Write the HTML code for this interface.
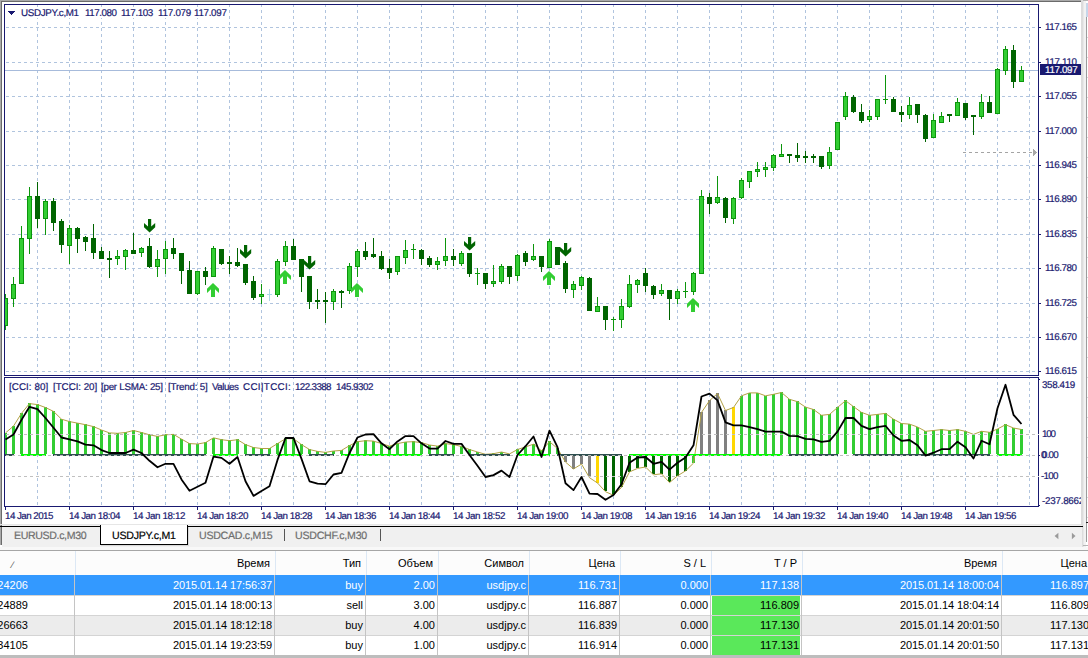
<!DOCTYPE html>
<html><head><meta charset="utf-8"><title>USDJPY.c,M1</title>
<style>
html,body{margin:0;padding:0}
body{width:1088px;height:658px;overflow:hidden;background:#fff;position:relative;font-family:"Liberation Sans",sans-serif}
.t{position:absolute;white-space:pre;line-height:12px;height:12px;-webkit-text-stroke:0.2px currentColor;transform:rotate(0.03deg);transform-origin:0 50%}
.h,.c{position:absolute;white-space:pre;text-align:right;font-size:11px;line-height:14px;height:14px;color:#000}
</style></head><body>
<svg width="1088" height="548" viewBox="0 0 1088 548" shape-rendering="crispEdges" style="position:absolute;left:0;top:0"><rect x="0" y="0" width="1081" height="1" fill="#a9a9a9"/>
<rect x="0" y="1" width="1081" height="1" fill="#6b6b6b"/>
<rect x="0" y="0" width="1" height="545" fill="#a9a9a9"/>
<rect x="1" y="1" width="1" height="544" fill="#6b6b6b"/>
<rect x="1081" y="0" width="2" height="548" fill="#dcdcdc"/>
<rect x="1083" y="0" width="1" height="548" fill="#e8e8e8"/>
<rect x="1084" y="0" width="2" height="548" fill="#f2f2f2"/>
<rect x="1083" y="0" width="5" height="1" fill="#b4b4b4"/>
<rect x="1086" y="3" width="2" height="14" fill="#c6d6ea"/>
<rect x="1086" y="17" width="1" height="525" fill="#9c9c9c"/>
<rect x="1086" y="522" width="2" height="1" fill="#202020"/>
<rect x="1083" y="545" width="5" height="1" fill="#b4b4b4"/>
<rect x="1087" y="37" width="1" height="1" fill="#d8d8d8"/>
<rect x="1087" y="57" width="1" height="1" fill="#d8d8d8"/>
<rect x="1087" y="77" width="1" height="1" fill="#d8d8d8"/>
<rect x="1087" y="97" width="1" height="1" fill="#d8d8d8"/>
<rect x="1087" y="117" width="1" height="1" fill="#d8d8d8"/>
<rect x="1087" y="137" width="1" height="1" fill="#d8d8d8"/>
<rect x="1087" y="157" width="1" height="1" fill="#d8d8d8"/>
<rect x="1087" y="177" width="1" height="1" fill="#d8d8d8"/>
<rect x="1087" y="197" width="1" height="1" fill="#d8d8d8"/>
<rect x="1087" y="217" width="1" height="1" fill="#d8d8d8"/>
<rect x="1087" y="237" width="1" height="1" fill="#d8d8d8"/>
<rect x="1087" y="257" width="1" height="1" fill="#d8d8d8"/>
<rect x="1087" y="277" width="1" height="1" fill="#d8d8d8"/>
<rect x="1087" y="297" width="1" height="1" fill="#d8d8d8"/>
<rect x="1087" y="317" width="1" height="1" fill="#d8d8d8"/>
<rect x="1087" y="337" width="1" height="1" fill="#d8d8d8"/>
<rect x="1087" y="357" width="1" height="1" fill="#d8d8d8"/>
<rect x="1087" y="377" width="1" height="1" fill="#d8d8d8"/>
<rect x="1087" y="397" width="1" height="1" fill="#d8d8d8"/>
<rect x="1087" y="417" width="1" height="1" fill="#d8d8d8"/>
<rect x="1087" y="437" width="1" height="1" fill="#d8d8d8"/>
<rect x="1087" y="457" width="1" height="1" fill="#d8d8d8"/>
<rect x="1087" y="477" width="1" height="1" fill="#d8d8d8"/>
<rect x="1087" y="497" width="1" height="1" fill="#d8d8d8"/>
<rect x="1087" y="517" width="1" height="1" fill="#d8d8d8"/>
<path d="M37.5 4V375M69.5 4V375M101.5 4V375M133.5 4V375M165.5 4V375M197.5 4V375M229.5 4V375M261.5 4V375M293.5 4V375M325.5 4V375M357.5 4V375M389.5 4V375M421.5 4V375M453.5 4V375M485.5 4V375M517.5 4V375M549.5 4V375M581.5 4V375M613.5 4V375M645.5 4V375M677.5 4V375M709.5 4V375M741.5 4V375M773.5 4V375M805.5 4V375M837.5 4V375M869.5 4V375M901.5 4V375M933.5 4V375M965.5 4V375M997.5 4V375M1029.5 4V375" stroke="#b0c4de" stroke-dasharray="3 3" fill="none"/>
<path d="M37.5 378V506M69.5 378V506M101.5 378V506M133.5 378V506M165.5 378V506M197.5 378V506M229.5 378V506M261.5 378V506M293.5 378V506M325.5 378V506M357.5 378V506M389.5 378V506M421.5 378V506M453.5 378V506M485.5 378V506M517.5 378V506M549.5 378V506M581.5 378V506M613.5 378V506M645.5 378V506M677.5 378V506M709.5 378V506M741.5 378V506M773.5 378V506M805.5 378V506M837.5 378V506M869.5 378V506M901.5 378V506M933.5 378V506M965.5 378V506M997.5 378V506M1029.5 378V506" stroke="#b0c4de" stroke-dasharray="3 3" stroke-dashoffset="2" fill="none"/>
<path d="M6 27.5H1038M6 62.5H1038M6 96.5H1038M6 131.5H1038M6 165.5H1038M6 199.5H1038M6 234.5H1038M6 268.5H1038M6 303.5H1038M6 337.5H1038M6 371.5H1038" stroke="#b0c4de" stroke-dasharray="3 3" fill="none"/>
<rect x="20" y="7" width="208" height="11" fill="#fff"/>
<rect x="5" y="70" width="1033" height="1" fill="#a7bbdb"/>
<rect x="5" y="294" width="1" height="36" fill="#0c960c"/>
<rect x="5" y="298" width="3" height="28" fill="#0c960c"/>
<rect x="5" y="299" width="2" height="26" fill="#32cd32"/>
<rect x="13" y="277" width="1" height="30" fill="#0c960c"/>
<rect x="11" y="284" width="5" height="15" fill="#0c960c"/>
<rect x="12" y="285" width="3" height="13" fill="#32cd32"/>
<rect x="21" y="226" width="1" height="58" fill="#0c960c"/>
<rect x="19" y="238" width="5" height="46" fill="#0c960c"/>
<rect x="20" y="239" width="3" height="44" fill="#32cd32"/>
<rect x="29" y="187" width="1" height="67" fill="#0c960c"/>
<rect x="27" y="196" width="5" height="43" fill="#0c960c"/>
<rect x="28" y="197" width="3" height="41" fill="#32cd32"/>
<rect x="37" y="182" width="1" height="46" fill="#006400"/>
<rect x="35" y="196" width="5" height="23" fill="#006400"/>
<rect x="45" y="199" width="1" height="36" fill="#0c960c"/>
<rect x="43" y="201" width="5" height="18" fill="#0c960c"/>
<rect x="44" y="202" width="3" height="16" fill="#32cd32"/>
<rect x="53" y="198" width="1" height="33" fill="#006400"/>
<rect x="51" y="201" width="5" height="22" fill="#006400"/>
<rect x="61" y="219" width="1" height="34" fill="#006400"/>
<rect x="59" y="221" width="5" height="24" fill="#006400"/>
<rect x="69" y="225" width="1" height="39" fill="#0c960c"/>
<rect x="67" y="228" width="5" height="18" fill="#0c960c"/>
<rect x="68" y="229" width="3" height="16" fill="#32cd32"/>
<rect x="77" y="227" width="1" height="26" fill="#006400"/>
<rect x="75" y="228" width="5" height="11" fill="#006400"/>
<rect x="85" y="236" width="1" height="15" fill="#006400"/>
<rect x="83" y="237" width="5" height="5" fill="#006400"/>
<rect x="93" y="224" width="1" height="35" fill="#006400"/>
<rect x="91" y="238" width="5" height="15" fill="#006400"/>
<rect x="101" y="247" width="1" height="12" fill="#006400"/>
<rect x="99" y="251" width="5" height="8" fill="#006400"/>
<rect x="109" y="251" width="1" height="27" fill="#006400"/>
<rect x="107" y="258" width="5" height="2" fill="#006400"/>
<rect x="117" y="250" width="1" height="15" fill="#0c960c"/>
<rect x="115" y="256" width="5" height="3" fill="#0c960c"/>
<rect x="116" y="257" width="3" height="1" fill="#32cd32"/>
<rect x="125" y="249" width="1" height="21" fill="#0c960c"/>
<rect x="123" y="250" width="5" height="7" fill="#0c960c"/>
<rect x="124" y="251" width="3" height="5" fill="#32cd32"/>
<rect x="133" y="233" width="1" height="21" fill="#006400"/>
<rect x="131" y="250" width="5" height="4" fill="#006400"/>
<rect x="141" y="247" width="1" height="10" fill="#0c960c"/>
<rect x="139" y="248" width="5" height="5" fill="#0c960c"/>
<rect x="140" y="249" width="3" height="3" fill="#32cd32"/>
<rect x="149" y="238" width="1" height="30" fill="#006400"/>
<rect x="147" y="246" width="5" height="21" fill="#006400"/>
<rect x="157" y="250" width="1" height="27" fill="#0c960c"/>
<rect x="155" y="259" width="5" height="8" fill="#0c960c"/>
<rect x="156" y="260" width="3" height="6" fill="#32cd32"/>
<rect x="165" y="241" width="1" height="33" fill="#0c960c"/>
<rect x="163" y="249" width="5" height="10" fill="#0c960c"/>
<rect x="164" y="250" width="3" height="8" fill="#32cd32"/>
<rect x="173" y="238" width="1" height="21" fill="#006400"/>
<rect x="171" y="248" width="5" height="6" fill="#006400"/>
<rect x="181" y="253" width="1" height="31" fill="#006400"/>
<rect x="179" y="253" width="5" height="18" fill="#006400"/>
<rect x="189" y="261" width="1" height="33" fill="#006400"/>
<rect x="187" y="270" width="5" height="24" fill="#006400"/>
<rect x="197" y="271" width="1" height="24" fill="#0c960c"/>
<rect x="195" y="271" width="5" height="23" fill="#0c960c"/>
<rect x="196" y="272" width="3" height="21" fill="#32cd32"/>
<rect x="205" y="267" width="1" height="18" fill="#006400"/>
<rect x="203" y="271" width="5" height="6" fill="#006400"/>
<rect x="213" y="246" width="1" height="31" fill="#0c960c"/>
<rect x="211" y="248" width="5" height="29" fill="#0c960c"/>
<rect x="212" y="249" width="3" height="27" fill="#32cd32"/>
<rect x="221" y="249" width="1" height="16" fill="#006400"/>
<rect x="219" y="249" width="5" height="15" fill="#006400"/>
<rect x="229" y="256" width="1" height="18" fill="#006400"/>
<rect x="227" y="262" width="5" height="2" fill="#006400"/>
<rect x="237" y="248" width="1" height="19" fill="#006400"/>
<rect x="235" y="262" width="5" height="4" fill="#006400"/>
<rect x="245" y="264" width="1" height="21" fill="#006400"/>
<rect x="243" y="264" width="5" height="19" fill="#006400"/>
<rect x="253" y="276" width="1" height="24" fill="#006400"/>
<rect x="251" y="281" width="5" height="17" fill="#006400"/>
<rect x="261" y="284" width="1" height="20" fill="#0c960c"/>
<rect x="259" y="294" width="5" height="3" fill="#0c960c"/>
<rect x="260" y="295" width="3" height="1" fill="#32cd32"/>
<rect x="269" y="289" width="1" height="12" fill="#add8e6"/>
<rect x="267" y="294" width="5" height="1" fill="#add8e6"/>
<rect x="277" y="259" width="1" height="38" fill="#0c960c"/>
<rect x="275" y="261" width="5" height="34" fill="#0c960c"/>
<rect x="276" y="262" width="3" height="32" fill="#32cd32"/>
<rect x="285" y="241" width="1" height="25" fill="#0c960c"/>
<rect x="283" y="246" width="5" height="16" fill="#0c960c"/>
<rect x="284" y="247" width="3" height="14" fill="#32cd32"/>
<rect x="293" y="239" width="1" height="21" fill="#006400"/>
<rect x="291" y="246" width="5" height="14" fill="#006400"/>
<rect x="301" y="259" width="1" height="33" fill="#006400"/>
<rect x="299" y="259" width="5" height="18" fill="#006400"/>
<rect x="309" y="276" width="1" height="33" fill="#006400"/>
<rect x="307" y="276" width="5" height="26" fill="#006400"/>
<rect x="317" y="289" width="1" height="20" fill="#006400"/>
<rect x="315" y="300" width="5" height="2" fill="#006400"/>
<rect x="325" y="292" width="1" height="31" fill="#006400"/>
<rect x="323" y="300" width="5" height="2" fill="#006400"/>
<rect x="333" y="289" width="1" height="21" fill="#0c960c"/>
<rect x="331" y="291" width="5" height="11" fill="#0c960c"/>
<rect x="332" y="292" width="3" height="9" fill="#32cd32"/>
<rect x="341" y="290" width="1" height="18" fill="#006400"/>
<rect x="339" y="291" width="5" height="2" fill="#006400"/>
<rect x="349" y="263" width="1" height="31" fill="#0c960c"/>
<rect x="347" y="266" width="5" height="25" fill="#0c960c"/>
<rect x="348" y="267" width="3" height="23" fill="#32cd32"/>
<rect x="357" y="249" width="1" height="28" fill="#0c960c"/>
<rect x="355" y="251" width="5" height="16" fill="#0c960c"/>
<rect x="356" y="252" width="3" height="14" fill="#32cd32"/>
<rect x="365" y="242" width="1" height="18" fill="#006400"/>
<rect x="363" y="251" width="5" height="6" fill="#006400"/>
<rect x="373" y="238" width="1" height="20" fill="#006400"/>
<rect x="371" y="254" width="5" height="3" fill="#006400"/>
<rect x="381" y="251" width="1" height="19" fill="#006400"/>
<rect x="379" y="256" width="5" height="13" fill="#006400"/>
<rect x="389" y="259" width="1" height="20" fill="#006400"/>
<rect x="387" y="268" width="5" height="5" fill="#006400"/>
<rect x="397" y="256" width="1" height="19" fill="#0c960c"/>
<rect x="395" y="256" width="5" height="16" fill="#0c960c"/>
<rect x="396" y="257" width="3" height="14" fill="#32cd32"/>
<rect x="405" y="240" width="1" height="24" fill="#0c960c"/>
<rect x="403" y="250" width="5" height="8" fill="#0c960c"/>
<rect x="404" y="251" width="3" height="6" fill="#32cd32"/>
<rect x="413" y="244" width="1" height="15" fill="#0c960c"/>
<rect x="411" y="249" width="5" height="1" fill="#0c960c"/>
<rect x="421" y="249" width="1" height="16" fill="#006400"/>
<rect x="419" y="250" width="5" height="9" fill="#006400"/>
<rect x="429" y="256" width="1" height="11" fill="#006400"/>
<rect x="427" y="258" width="5" height="7" fill="#006400"/>
<rect x="437" y="257" width="1" height="13" fill="#0c960c"/>
<rect x="435" y="261" width="5" height="4" fill="#0c960c"/>
<rect x="436" y="262" width="3" height="2" fill="#32cd32"/>
<rect x="445" y="238" width="1" height="28" fill="#0c960c"/>
<rect x="443" y="256" width="5" height="5" fill="#0c960c"/>
<rect x="444" y="257" width="3" height="3" fill="#32cd32"/>
<rect x="453" y="249" width="1" height="17" fill="#006400"/>
<rect x="451" y="256" width="5" height="4" fill="#006400"/>
<rect x="461" y="251" width="1" height="15" fill="#0c960c"/>
<rect x="459" y="253" width="5" height="11" fill="#0c960c"/>
<rect x="460" y="254" width="3" height="9" fill="#32cd32"/>
<rect x="469" y="253" width="1" height="24" fill="#006400"/>
<rect x="467" y="253" width="5" height="21" fill="#006400"/>
<rect x="477" y="268" width="1" height="17" fill="#0c960c"/>
<rect x="475" y="273" width="5" height="1" fill="#0c960c"/>
<rect x="485" y="273" width="1" height="16" fill="#006400"/>
<rect x="483" y="273" width="5" height="11" fill="#006400"/>
<rect x="493" y="265" width="1" height="22" fill="#0c960c"/>
<rect x="491" y="281" width="5" height="3" fill="#0c960c"/>
<rect x="492" y="282" width="3" height="1" fill="#32cd32"/>
<rect x="501" y="264" width="1" height="20" fill="#0c960c"/>
<rect x="499" y="266" width="5" height="16" fill="#0c960c"/>
<rect x="500" y="267" width="3" height="14" fill="#32cd32"/>
<rect x="509" y="266" width="1" height="18" fill="#006400"/>
<rect x="507" y="266" width="5" height="11" fill="#006400"/>
<rect x="517" y="254" width="1" height="27" fill="#0c960c"/>
<rect x="515" y="255" width="5" height="21" fill="#0c960c"/>
<rect x="516" y="256" width="3" height="19" fill="#32cd32"/>
<rect x="525" y="251" width="1" height="15" fill="#006400"/>
<rect x="523" y="253" width="5" height="9" fill="#006400"/>
<rect x="533" y="244" width="1" height="17" fill="#0c960c"/>
<rect x="531" y="256" width="5" height="4" fill="#0c960c"/>
<rect x="532" y="257" width="3" height="2" fill="#32cd32"/>
<rect x="541" y="256" width="1" height="16" fill="#006400"/>
<rect x="539" y="256" width="5" height="11" fill="#006400"/>
<rect x="549" y="239" width="1" height="29" fill="#0c960c"/>
<rect x="547" y="241" width="5" height="27" fill="#0c960c"/>
<rect x="548" y="242" width="3" height="25" fill="#32cd32"/>
<rect x="557" y="247" width="1" height="18" fill="#006400"/>
<rect x="555" y="247" width="5" height="18" fill="#006400"/>
<rect x="565" y="261" width="1" height="32" fill="#006400"/>
<rect x="563" y="263" width="5" height="26" fill="#006400"/>
<rect x="573" y="281" width="1" height="17" fill="#0c960c"/>
<rect x="571" y="284" width="5" height="6" fill="#0c960c"/>
<rect x="572" y="285" width="3" height="4" fill="#32cd32"/>
<rect x="581" y="276" width="1" height="14" fill="#0c960c"/>
<rect x="579" y="277" width="5" height="9" fill="#0c960c"/>
<rect x="580" y="278" width="3" height="7" fill="#32cd32"/>
<rect x="589" y="277" width="1" height="34" fill="#006400"/>
<rect x="587" y="278" width="5" height="33" fill="#006400"/>
<rect x="597" y="297" width="1" height="15" fill="#0c960c"/>
<rect x="595" y="306" width="5" height="6" fill="#0c960c"/>
<rect x="596" y="307" width="3" height="4" fill="#32cd32"/>
<rect x="605" y="306" width="1" height="24" fill="#006400"/>
<rect x="603" y="306" width="5" height="14" fill="#006400"/>
<rect x="613" y="317" width="1" height="14" fill="#0c960c"/>
<rect x="611" y="319" width="5" height="1" fill="#0c960c"/>
<rect x="621" y="299" width="1" height="29" fill="#0c960c"/>
<rect x="619" y="306" width="5" height="14" fill="#0c960c"/>
<rect x="620" y="307" width="3" height="12" fill="#32cd32"/>
<rect x="629" y="275" width="1" height="33" fill="#0c960c"/>
<rect x="627" y="284" width="5" height="23" fill="#0c960c"/>
<rect x="628" y="285" width="3" height="21" fill="#32cd32"/>
<rect x="637" y="279" width="1" height="14" fill="#0c960c"/>
<rect x="635" y="280" width="5" height="5" fill="#0c960c"/>
<rect x="636" y="281" width="3" height="3" fill="#32cd32"/>
<rect x="645" y="268" width="1" height="24" fill="#006400"/>
<rect x="643" y="273" width="5" height="13" fill="#006400"/>
<rect x="653" y="285" width="1" height="14" fill="#006400"/>
<rect x="651" y="286" width="5" height="9" fill="#006400"/>
<rect x="661" y="284" width="1" height="12" fill="#0c960c"/>
<rect x="659" y="290" width="5" height="4" fill="#0c960c"/>
<rect x="660" y="291" width="3" height="2" fill="#32cd32"/>
<rect x="669" y="290" width="1" height="30" fill="#006400"/>
<rect x="667" y="290" width="5" height="9" fill="#006400"/>
<rect x="677" y="289" width="1" height="15" fill="#0c960c"/>
<rect x="675" y="291" width="5" height="8" fill="#0c960c"/>
<rect x="676" y="292" width="3" height="6" fill="#32cd32"/>
<rect x="685" y="282" width="1" height="16" fill="#0c960c"/>
<rect x="683" y="291" width="5" height="1" fill="#0c960c"/>
<rect x="693" y="272" width="1" height="23" fill="#0c960c"/>
<rect x="691" y="273" width="5" height="19" fill="#0c960c"/>
<rect x="692" y="274" width="3" height="17" fill="#32cd32"/>
<rect x="701" y="190" width="1" height="84" fill="#0c960c"/>
<rect x="699" y="196" width="5" height="78" fill="#0c960c"/>
<rect x="700" y="197" width="3" height="76" fill="#32cd32"/>
<rect x="709" y="193" width="1" height="21" fill="#006400"/>
<rect x="707" y="197" width="5" height="7" fill="#006400"/>
<rect x="717" y="176" width="1" height="28" fill="#0c960c"/>
<rect x="715" y="197" width="5" height="6" fill="#0c960c"/>
<rect x="716" y="198" width="3" height="4" fill="#32cd32"/>
<rect x="725" y="197" width="1" height="26" fill="#006400"/>
<rect x="723" y="198" width="5" height="20" fill="#006400"/>
<rect x="733" y="197" width="1" height="27" fill="#0c960c"/>
<rect x="731" y="198" width="5" height="21" fill="#0c960c"/>
<rect x="732" y="199" width="3" height="19" fill="#32cd32"/>
<rect x="741" y="178" width="1" height="21" fill="#0c960c"/>
<rect x="739" y="180" width="5" height="18" fill="#0c960c"/>
<rect x="740" y="181" width="3" height="16" fill="#32cd32"/>
<rect x="749" y="171" width="1" height="17" fill="#0c960c"/>
<rect x="747" y="171" width="5" height="11" fill="#0c960c"/>
<rect x="748" y="172" width="3" height="9" fill="#32cd32"/>
<rect x="757" y="162" width="1" height="15" fill="#0c960c"/>
<rect x="755" y="169" width="5" height="3" fill="#0c960c"/>
<rect x="756" y="170" width="3" height="1" fill="#32cd32"/>
<rect x="765" y="162" width="1" height="15" fill="#0c960c"/>
<rect x="763" y="167" width="5" height="3" fill="#0c960c"/>
<rect x="764" y="168" width="3" height="1" fill="#32cd32"/>
<rect x="773" y="154" width="1" height="17" fill="#0c960c"/>
<rect x="771" y="155" width="5" height="13" fill="#0c960c"/>
<rect x="772" y="156" width="3" height="11" fill="#32cd32"/>
<rect x="781" y="144" width="1" height="13" fill="#0c960c"/>
<rect x="779" y="154" width="5" height="3" fill="#0c960c"/>
<rect x="780" y="155" width="3" height="1" fill="#32cd32"/>
<rect x="789" y="154" width="1" height="9" fill="#006400"/>
<rect x="787" y="154" width="5" height="2" fill="#006400"/>
<rect x="797" y="143" width="1" height="19" fill="#006400"/>
<rect x="795" y="155" width="5" height="3" fill="#006400"/>
<rect x="805" y="151" width="1" height="12" fill="#006400"/>
<rect x="803" y="156" width="5" height="2" fill="#006400"/>
<rect x="813" y="154" width="1" height="9" fill="#006400"/>
<rect x="811" y="156" width="5" height="2" fill="#006400"/>
<rect x="821" y="156" width="1" height="13" fill="#006400"/>
<rect x="819" y="156" width="5" height="11" fill="#006400"/>
<rect x="829" y="147" width="1" height="22" fill="#0c960c"/>
<rect x="827" y="152" width="5" height="14" fill="#0c960c"/>
<rect x="828" y="153" width="3" height="12" fill="#32cd32"/>
<rect x="837" y="122" width="1" height="28" fill="#0c960c"/>
<rect x="835" y="122" width="5" height="28" fill="#0c960c"/>
<rect x="836" y="123" width="3" height="26" fill="#32cd32"/>
<rect x="845" y="92" width="1" height="28" fill="#0c960c"/>
<rect x="843" y="96" width="5" height="21" fill="#0c960c"/>
<rect x="844" y="97" width="3" height="19" fill="#32cd32"/>
<rect x="853" y="95" width="1" height="18" fill="#006400"/>
<rect x="851" y="97" width="5" height="15" fill="#006400"/>
<rect x="861" y="104" width="1" height="19" fill="#006400"/>
<rect x="859" y="112" width="5" height="9" fill="#006400"/>
<rect x="869" y="110" width="1" height="12" fill="#0c960c"/>
<rect x="867" y="116" width="5" height="4" fill="#0c960c"/>
<rect x="868" y="117" width="3" height="2" fill="#32cd32"/>
<rect x="877" y="99" width="1" height="21" fill="#0c960c"/>
<rect x="875" y="99" width="5" height="18" fill="#0c960c"/>
<rect x="876" y="100" width="3" height="16" fill="#32cd32"/>
<rect x="885" y="75" width="1" height="29" fill="#0c960c"/>
<rect x="883" y="99" width="5" height="1" fill="#0c960c"/>
<rect x="893" y="97" width="1" height="15" fill="#006400"/>
<rect x="891" y="99" width="5" height="13" fill="#006400"/>
<rect x="901" y="106" width="1" height="16" fill="#006400"/>
<rect x="899" y="112" width="5" height="3" fill="#006400"/>
<rect x="909" y="97" width="1" height="22" fill="#0c960c"/>
<rect x="907" y="105" width="5" height="10" fill="#0c960c"/>
<rect x="908" y="106" width="3" height="8" fill="#32cd32"/>
<rect x="917" y="104" width="1" height="19" fill="#006400"/>
<rect x="915" y="104" width="5" height="11" fill="#006400"/>
<rect x="925" y="114" width="1" height="28" fill="#006400"/>
<rect x="923" y="115" width="5" height="24" fill="#006400"/>
<rect x="933" y="114" width="1" height="24" fill="#0c960c"/>
<rect x="931" y="120" width="5" height="18" fill="#0c960c"/>
<rect x="932" y="121" width="3" height="16" fill="#32cd32"/>
<rect x="941" y="112" width="1" height="11" fill="#0c960c"/>
<rect x="939" y="116" width="5" height="7" fill="#0c960c"/>
<rect x="940" y="117" width="3" height="5" fill="#32cd32"/>
<rect x="949" y="114" width="1" height="8" fill="#006400"/>
<rect x="947" y="114" width="5" height="2" fill="#006400"/>
<rect x="957" y="98" width="1" height="18" fill="#0c960c"/>
<rect x="955" y="102" width="5" height="14" fill="#0c960c"/>
<rect x="956" y="103" width="3" height="12" fill="#32cd32"/>
<rect x="965" y="103" width="1" height="17" fill="#006400"/>
<rect x="963" y="103" width="5" height="15" fill="#006400"/>
<rect x="973" y="115" width="1" height="20" fill="#006400"/>
<rect x="971" y="115" width="5" height="2" fill="#006400"/>
<rect x="981" y="94" width="1" height="25" fill="#0c960c"/>
<rect x="979" y="102" width="5" height="15" fill="#0c960c"/>
<rect x="980" y="103" width="3" height="13" fill="#32cd32"/>
<rect x="989" y="96" width="1" height="17" fill="#006400"/>
<rect x="987" y="102" width="5" height="11" fill="#006400"/>
<rect x="997" y="68" width="1" height="46" fill="#0c960c"/>
<rect x="995" y="69" width="5" height="45" fill="#0c960c"/>
<rect x="996" y="70" width="3" height="43" fill="#32cd32"/>
<rect x="1005" y="46" width="1" height="29" fill="#0c960c"/>
<rect x="1003" y="49" width="5" height="22" fill="#0c960c"/>
<rect x="1004" y="50" width="3" height="20" fill="#32cd32"/>
<rect x="1013" y="45" width="1" height="43" fill="#006400"/>
<rect x="1011" y="50" width="5" height="32" fill="#006400"/>
<rect x="1021" y="66" width="1" height="16" fill="#0c960c"/>
<rect x="1019" y="70" width="5" height="12" fill="#0c960c"/>
<rect x="1020" y="71" width="3" height="10" fill="#32cd32"/>
<path d="M148.0 219.0L151.2 219.0L151.2 226.6L155.2 223.0L155.2 227.3L149.6 232.4L144.0 227.3L144.0 223.0L148.0 226.6Z" fill="#006400" shape-rendering="geometricPrecision"/>
<path d="M244.0 245.0L247.2 245.0L247.2 252.6L251.2 249.0L251.2 253.3L245.6 258.4L240.0 253.3L240.0 249.0L244.0 252.6Z" fill="#006400" shape-rendering="geometricPrecision"/>
<path d="M308.0 256.0L311.2 256.0L311.2 263.6L315.2 260.0L315.2 264.3L309.6 269.4L304.0 264.3L304.0 260.0L308.0 263.6Z" fill="#006400" shape-rendering="geometricPrecision"/>
<path d="M468.0 237.0L471.2 237.0L471.2 244.6L475.2 241.0L475.2 245.3L469.6 250.4L464.0 245.3L464.0 241.0L468.0 244.6Z" fill="#006400" shape-rendering="geometricPrecision"/>
<path d="M564.0 243.0L567.2 243.0L567.2 250.6L571.2 247.0L571.2 251.3L565.6 256.4L560.0 251.3L560.0 247.0L564.0 250.6Z" fill="#006400" shape-rendering="geometricPrecision"/>
<path d="M213.0 283.0L219.0 288.8L219.0 293.0L215.0 289.2L215.0 297.0L211.0 297.0L211.0 289.2L207.0 293.0L207.0 288.8Z" fill="#32cd32" shape-rendering="geometricPrecision"/>
<path d="M285.0 270.0L291.0 275.8L291.0 280.0L287.0 276.2L287.0 284.0L283.0 284.0L283.0 276.2L279.0 280.0L279.0 275.8Z" fill="#32cd32" shape-rendering="geometricPrecision"/>
<path d="M357.0 283.0L363.0 288.8L363.0 293.0L359.0 289.2L359.0 297.0L355.0 297.0L355.0 289.2L351.0 293.0L351.0 288.8Z" fill="#32cd32" shape-rendering="geometricPrecision"/>
<path d="M549.0 271.0L555.0 276.8L555.0 281.0L551.0 277.2L551.0 285.0L547.0 285.0L547.0 277.2L543.0 281.0L543.0 276.8Z" fill="#32cd32" shape-rendering="geometricPrecision"/>
<path d="M693.0 298.0L699.0 303.8L699.0 308.0L695.0 304.2L695.0 312.0L691.0 312.0L691.0 304.2L687.0 308.0L687.0 303.8Z" fill="#32cd32" shape-rendering="geometricPrecision"/>
<path d="M963 152.5H1032" stroke="#a4a4a4" stroke-dasharray="3 3" fill="none"/>
<path d="M1033 149h1v1h1v1h1v1h1v1h-1v1h-1v1h-1v1h-1z" fill="#a8a8a8"/>
<rect x="5" y="433" width="2" height="21" fill="#32cd32"/>
<rect x="12" y="426" width="3" height="28" fill="#32cd32"/>
<rect x="20" y="413" width="3" height="41" fill="#32cd32"/>
<rect x="28" y="403" width="3" height="51" fill="#32cd32"/>
<rect x="36" y="404" width="3" height="50" fill="#32cd32"/>
<rect x="44" y="407" width="3" height="47" fill="#32cd32"/>
<rect x="52" y="411" width="3" height="43" fill="#32cd32"/>
<rect x="60" y="419" width="3" height="35" fill="#32cd32"/>
<rect x="68" y="421" width="3" height="33" fill="#32cd32"/>
<rect x="76" y="423" width="3" height="31" fill="#32cd32"/>
<rect x="84" y="424" width="3" height="30" fill="#32cd32"/>
<rect x="92" y="426" width="3" height="28" fill="#32cd32"/>
<rect x="100" y="430" width="3" height="24" fill="#32cd32"/>
<rect x="108" y="433" width="3" height="21" fill="#32cd32"/>
<rect x="116" y="433" width="3" height="21" fill="#32cd32"/>
<rect x="124" y="432" width="3" height="22" fill="#32cd32"/>
<rect x="132" y="430" width="3" height="24" fill="#32cd32"/>
<rect x="140" y="432" width="3" height="22" fill="#32cd32"/>
<rect x="148" y="434" width="3" height="20" fill="#32cd32"/>
<rect x="156" y="436" width="3" height="18" fill="#32cd32"/>
<rect x="164" y="434" width="3" height="20" fill="#32cd32"/>
<rect x="172" y="434" width="3" height="20" fill="#32cd32"/>
<rect x="180" y="439" width="3" height="15" fill="#32cd32"/>
<rect x="188" y="443" width="3" height="11" fill="#32cd32"/>
<rect x="196" y="444" width="3" height="10" fill="#32cd32"/>
<rect x="204" y="442" width="3" height="12" fill="#32cd32"/>
<rect x="212" y="438" width="3" height="16" fill="#32cd32"/>
<rect x="220" y="439" width="3" height="15" fill="#32cd32"/>
<rect x="228" y="440" width="3" height="14" fill="#32cd32"/>
<rect x="236" y="439" width="3" height="15" fill="#32cd32"/>
<rect x="244" y="444" width="3" height="10" fill="#32cd32"/>
<rect x="252" y="447" width="3" height="7" fill="#32cd32"/>
<rect x="260" y="448" width="3" height="6" fill="#32cd32"/>
<rect x="268" y="448" width="3" height="6" fill="#32cd32"/>
<rect x="276" y="443" width="3" height="11" fill="#32cd32"/>
<rect x="284" y="438" width="3" height="16" fill="#32cd32"/>
<rect x="292" y="438" width="3" height="16" fill="#32cd32"/>
<rect x="300" y="444" width="3" height="10" fill="#32cd32"/>
<rect x="308" y="449" width="3" height="5" fill="#32cd32"/>
<rect x="316" y="451" width="3" height="3" fill="#32cd32"/>
<rect x="324" y="452" width="3" height="2" fill="#32cd32"/>
<rect x="332" y="451" width="3" height="3" fill="#32cd32"/>
<rect x="340" y="450" width="3" height="4" fill="#32cd32"/>
<rect x="348" y="445" width="3" height="9" fill="#32cd32"/>
<rect x="356" y="441" width="3" height="13" fill="#32cd32"/>
<rect x="364" y="440" width="3" height="14" fill="#32cd32"/>
<rect x="372" y="441" width="3" height="13" fill="#32cd32"/>
<rect x="380" y="443" width="3" height="11" fill="#32cd32"/>
<rect x="388" y="446" width="3" height="8" fill="#32cd32"/>
<rect x="396" y="443" width="3" height="11" fill="#32cd32"/>
<rect x="404" y="442" width="3" height="12" fill="#32cd32"/>
<rect x="412" y="441" width="3" height="13" fill="#32cd32"/>
<rect x="420" y="442" width="3" height="12" fill="#32cd32"/>
<rect x="428" y="445" width="3" height="9" fill="#32cd32"/>
<rect x="436" y="446" width="3" height="8" fill="#32cd32"/>
<rect x="444" y="443" width="3" height="11" fill="#32cd32"/>
<rect x="452" y="444" width="3" height="10" fill="#32cd32"/>
<rect x="460" y="446" width="3" height="8" fill="#32cd32"/>
<rect x="468" y="449" width="3" height="5" fill="#32cd32"/>
<rect x="476" y="452" width="3" height="2" fill="#32cd32"/>
<rect x="484" y="454" width="3" height="0" fill="#32cd32"/>
<rect x="492" y="453" width="3" height="1" fill="#32cd32"/>
<rect x="500" y="452" width="3" height="2" fill="#32cd32"/>
<rect x="508" y="454" width="3" height="0" fill="#32cd32"/>
<rect x="516" y="449" width="3" height="5" fill="#32cd32"/>
<rect x="524" y="447" width="3" height="7" fill="#32cd32"/>
<rect x="532" y="444" width="3" height="10" fill="#32cd32"/>
<rect x="540" y="450" width="3" height="4" fill="#32cd32"/>
<rect x="548" y="441" width="3" height="13" fill="#32cd32"/>
<rect x="556" y="448" width="3" height="6" fill="#32cd32"/>
<rect x="564" y="456" width="3" height="6" fill="#808080"/>
<rect x="572" y="456" width="3" height="13" fill="#808080"/>
<rect x="580" y="456" width="3" height="8" fill="#808080"/>
<rect x="588" y="456" width="3" height="21" fill="#808080"/>
<rect x="596" y="456" width="3" height="27" fill="#ffd700"/>
<rect x="604" y="456" width="3" height="35" fill="#006400"/>
<rect x="612" y="456" width="3" height="39" fill="#006400"/>
<rect x="620" y="456" width="3" height="31" fill="#006400"/>
<rect x="628" y="456" width="3" height="16" fill="#006400"/>
<rect x="636" y="456" width="3" height="12" fill="#006400"/>
<rect x="644" y="456" width="3" height="11" fill="#006400"/>
<rect x="652" y="456" width="3" height="18" fill="#006400"/>
<rect x="660" y="456" width="3" height="18" fill="#006400"/>
<rect x="668" y="456" width="3" height="26" fill="#006400"/>
<rect x="676" y="456" width="3" height="20" fill="#006400"/>
<rect x="684" y="456" width="3" height="15" fill="#006400"/>
<rect x="692" y="456" width="3" height="7" fill="#32cd32"/>
<rect x="700" y="412" width="3" height="42" fill="#808080"/>
<rect x="708" y="400" width="3" height="54" fill="#808080"/>
<rect x="716" y="393" width="3" height="61" fill="#808080"/>
<rect x="724" y="410" width="3" height="44" fill="#808080"/>
<rect x="732" y="407" width="3" height="47" fill="#ffd700"/>
<rect x="740" y="396" width="3" height="58" fill="#32cd32"/>
<rect x="748" y="393" width="3" height="61" fill="#32cd32"/>
<rect x="756" y="393" width="3" height="61" fill="#32cd32"/>
<rect x="764" y="396" width="3" height="58" fill="#32cd32"/>
<rect x="772" y="394" width="3" height="60" fill="#32cd32"/>
<rect x="780" y="392" width="3" height="62" fill="#32cd32"/>
<rect x="788" y="399" width="3" height="55" fill="#32cd32"/>
<rect x="796" y="401" width="3" height="53" fill="#32cd32"/>
<rect x="804" y="407" width="3" height="47" fill="#32cd32"/>
<rect x="812" y="409" width="3" height="45" fill="#32cd32"/>
<rect x="820" y="415" width="3" height="39" fill="#32cd32"/>
<rect x="828" y="414" width="3" height="40" fill="#32cd32"/>
<rect x="836" y="407" width="3" height="47" fill="#32cd32"/>
<rect x="844" y="400" width="3" height="54" fill="#32cd32"/>
<rect x="852" y="406" width="3" height="48" fill="#32cd32"/>
<rect x="860" y="412" width="3" height="42" fill="#32cd32"/>
<rect x="868" y="415" width="3" height="39" fill="#32cd32"/>
<rect x="876" y="414" width="3" height="40" fill="#32cd32"/>
<rect x="884" y="413" width="3" height="41" fill="#32cd32"/>
<rect x="892" y="419" width="3" height="35" fill="#32cd32"/>
<rect x="900" y="423" width="3" height="31" fill="#32cd32"/>
<rect x="908" y="424" width="3" height="30" fill="#32cd32"/>
<rect x="916" y="427" width="3" height="27" fill="#32cd32"/>
<rect x="924" y="431" width="3" height="23" fill="#32cd32"/>
<rect x="932" y="430" width="3" height="24" fill="#32cd32"/>
<rect x="940" y="429" width="3" height="25" fill="#32cd32"/>
<rect x="948" y="430" width="3" height="24" fill="#32cd32"/>
<rect x="956" y="429" width="3" height="25" fill="#32cd32"/>
<rect x="964" y="431" width="3" height="23" fill="#32cd32"/>
<rect x="972" y="434" width="3" height="20" fill="#32cd32"/>
<rect x="980" y="431" width="3" height="23" fill="#32cd32"/>
<rect x="988" y="432" width="3" height="22" fill="#32cd32"/>
<rect x="996" y="429" width="3" height="25" fill="#32cd32"/>
<rect x="1004" y="424" width="3" height="30" fill="#32cd32"/>
<rect x="1012" y="428" width="3" height="26" fill="#32cd32"/>
<rect x="1020" y="429" width="3" height="25" fill="#32cd32"/>
<polyline points="5.5,432.9 13.5,426.1 21.5,413.3 29.5,403.6 37.5,404.6 45.5,407.5 53.5,411.4 61.5,419.2 69.5,421.6 77.5,423.1 85.5,424.7 93.5,426.6 101.5,430.0 109.5,432.9 117.5,433.3 125.5,432.5 133.5,430.5 141.5,432.5 149.5,434.8 157.5,436.4 165.5,434.8 173.5,434.4 181.5,439.1 189.5,443.6 197.5,444.0 205.5,442.6 213.5,437.8 221.5,439.7 229.5,440.7 237.5,439.7 245.5,444.6 253.5,447.5 261.5,448.5 269.5,448.5 277.5,443.6 285.5,438.7 293.5,438.7 301.5,444.6 309.5,449.5 317.5,451.4 325.5,452.4 333.5,451.0 341.5,450.4 349.5,445.6 357.5,441.7 365.5,440.7 373.5,441.1 381.5,443.6 389.5,446.1 397.5,443.6 405.5,442.0 413.5,441.7 421.5,442.6 429.5,445.0 437.5,446.1 445.5,443.6 453.5,444.6 461.5,446.5 469.5,449.5 477.5,452.0 485.5,454.3 493.5,453.7 501.5,452.0 509.5,453.9 517.5,449.5 525.5,446.9 533.5,444.2 541.5,450.8 549.5,441.7 557.5,448.5 565.5,462.1 573.5,468.9 581.5,464.1 589.5,477.7 597.5,483.0 605.5,491.7 613.5,495.3 621.5,487.5 629.5,471.9 637.5,468.4 645.5,467.0 653.5,474.8 661.5,473.8 669.5,482.6 677.5,475.8 685.5,470.9 693.5,463.1 701.5,412.4 709.5,400.7 717.5,393.5 725.5,410.5 733.5,407.5 741.5,395.8 749.5,392.9 757.5,392.9 765.5,395.8 773.5,394.3 781.5,392.5 789.5,399.3 797.5,401.7 805.5,407.1 813.5,409.5 821.5,415.3 829.5,414.4 837.5,407.5 845.5,400.7 853.5,406.6 861.5,412.4 869.5,415.3 877.5,414.4 885.5,413.4 893.5,419.2 901.5,423.5 909.5,424.1 917.5,427.0 925.5,431.3 933.5,430.5 941.5,429.6 949.5,430.5 957.5,429.6 965.5,431.3 973.5,434.4 981.5,431.3 989.5,432.3 997.5,429.0 1005.5,424.7 1013.5,428.0 1021.5,429.5" fill="none" stroke="#b3a246" stroke-width="1" shape-rendering="geometricPrecision"/>
<rect x="5" y="454" width="9" height="2" fill="#2f4f4f"/>
<rect x="21" y="454" width="25" height="2" fill="#00ff00"/>
<rect x="53" y="454" width="153" height="2" fill="#2f4f4f"/>
<rect x="213" y="454" width="25" height="2" fill="#00ff00"/>
<rect x="245" y="454" width="25" height="2" fill="#2f4f4f"/>
<rect x="277" y="454" width="25" height="2" fill="#00ff00"/>
<rect x="309" y="454" width="25" height="2" fill="#2f4f4f"/>
<rect x="341" y="454" width="81" height="2" fill="#00ff00"/>
<rect x="429" y="454" width="25" height="2" fill="#2f4f4f"/>
<rect x="469" y="454" width="41" height="2" fill="#2f4f4f"/>
<rect x="517" y="454" width="33" height="2" fill="#00ff00"/>
<rect x="557" y="454" width="65" height="2" fill="#2f4f4f"/>
<rect x="629" y="454" width="153" height="2" fill="#00ff00"/>
<rect x="789" y="454" width="49" height="2" fill="#2f4f4f"/>
<rect x="853" y="454" width="137" height="2" fill="#2f4f4f"/>
<rect x="997" y="454" width="25" height="2" fill="#00ff00"/>
<path d="M6 434.5H1038M6 455.5H1038M6 476.5H1038" stroke="#c0c0c0" stroke-dasharray="3 3" fill="none"/>
<polyline points="5.5,439.4 13.5,434.5 21.5,419.9 29.5,406.8 37.5,409.2 45.5,418.0 53.5,427.7 61.5,437.5 69.5,439.4 77.5,441.4 85.5,444.7 93.5,445.3 101.5,450.1 109.5,453.0 117.5,453.0 125.5,453.0 133.5,449.7 141.5,453.0 149.5,460.8 157.5,467.3 165.5,463.8 173.5,463.8 181.5,479.4 189.5,490.7 197.5,486.8 205.5,482.7 213.5,456.6 221.5,457.9 229.5,463.8 237.5,457.0 245.5,481.3 253.5,495.9 261.5,491.1 269.5,486.2 277.5,459.9 285.5,438.0 293.5,438.0 301.5,458.9 309.5,481.3 317.5,483.7 325.5,484.2 333.5,474.5 341.5,472.9 349.5,453.0 357.5,437.5 365.5,434.5 373.5,434.1 381.5,443.3 389.5,449.2 397.5,441.4 405.5,436.1 413.5,436.1 421.5,443.3 429.5,448.6 437.5,448.6 445.5,441.0 453.5,443.9 461.5,443.9 469.5,455.0 477.5,465.7 485.5,477.0 493.5,475.1 501.5,470.6 509.5,477.0 517.5,455.0 525.5,446.2 533.5,436.5 541.5,457.0 549.5,430.6 557.5,447.2 565.5,483.3 573.5,490.1 581.5,477.0 589.5,493.6 597.5,494.0 605.5,499.8 613.5,495.0 621.5,484.2 629.5,462.8 637.5,457.5 645.5,457.0 653.5,463.8 661.5,461.8 669.5,469.6 677.5,462.8 685.5,457.5 693.5,445.3 701.5,396.5 709.5,393.6 717.5,400.4 725.5,422.4 733.5,425.4 741.5,425.4 749.5,427.1 757.5,429.1 765.5,431.6 773.5,431.6 781.5,431.6 789.5,435.9 797.5,436.1 805.5,438.8 813.5,439.4 821.5,441.9 829.5,440.8 837.5,431.6 845.5,418.0 853.5,418.0 861.5,425.8 869.5,429.1 877.5,427.1 885.5,425.8 893.5,435.5 901.5,440.8 909.5,440.0 917.5,445.3 925.5,455.6 933.5,452.7 941.5,449.2 949.5,449.2 957.5,441.7 965.5,447.2 973.5,458.5 981.5,440.8 989.5,444.3 997.5,408.2 1005.5,384.8 1013.5,414.8 1021.5,424.0" fill="none" stroke="#000" stroke-width="1.8" stroke-linejoin="round" shape-rendering="geometricPrecision"/>
<rect x="4.5" y="4.5" width="1034" height="371" fill="none" stroke="#191970"/>
<rect x="4.5" y="377.5" width="1034" height="129" fill="none" stroke="#191970"/>
<rect x="1038" y="434" width="1" height="1" fill="#d8d8e0"/>
<rect x="1038" y="476" width="1" height="1" fill="#d8d8e0"/>
<rect x="1039" y="27" width="2" height="1" fill="#191970"/>
<rect x="1039" y="62" width="2" height="1" fill="#191970"/>
<rect x="1039" y="96" width="2" height="1" fill="#191970"/>
<rect x="1039" y="131" width="2" height="1" fill="#191970"/>
<rect x="1039" y="165" width="2" height="1" fill="#191970"/>
<rect x="1039" y="199" width="2" height="1" fill="#191970"/>
<rect x="1039" y="234" width="2" height="1" fill="#191970"/>
<rect x="1039" y="268" width="2" height="1" fill="#191970"/>
<rect x="1039" y="303" width="2" height="1" fill="#191970"/>
<rect x="1039" y="337" width="2" height="1" fill="#191970"/>
<rect x="1039" y="371" width="2" height="1" fill="#191970"/>
<rect x="1039" y="379" width="1" height="1" fill="#191970"/>
<rect x="1039" y="455" width="1" height="1" fill="#191970"/>
<rect x="1039" y="505" width="1" height="1" fill="#191970"/>
<rect x="5" y="507" width="1" height="3" fill="#191970"/>
<rect x="69" y="507" width="1" height="3" fill="#191970"/>
<rect x="133" y="507" width="1" height="3" fill="#191970"/>
<rect x="197" y="507" width="1" height="3" fill="#191970"/>
<rect x="261" y="507" width="1" height="3" fill="#191970"/>
<rect x="325" y="507" width="1" height="3" fill="#191970"/>
<rect x="389" y="507" width="1" height="3" fill="#191970"/>
<rect x="453" y="507" width="1" height="3" fill="#191970"/>
<rect x="517" y="507" width="1" height="3" fill="#191970"/>
<rect x="581" y="507" width="1" height="3" fill="#191970"/>
<rect x="645" y="507" width="1" height="3" fill="#191970"/>
<rect x="709" y="507" width="1" height="3" fill="#191970"/>
<rect x="773" y="507" width="1" height="3" fill="#191970"/>
<rect x="837" y="507" width="1" height="3" fill="#191970"/>
<rect x="901" y="507" width="1" height="3" fill="#191970"/>
<rect x="965" y="507" width="1" height="3" fill="#191970"/>
<path d="M8 11h7v1h-1v1h-1v1h-1v1h-1v-1h-1v-1h-1v-1h-1z" fill="#191970"/>
<rect x="1040" y="64" width="41" height="11" fill="#191970"/></svg>

<div style="position:absolute;left:2px;top:525px;width:1080px;height:22px;background:#f0f0f0"></div>
<div style="position:absolute;left:0;top:524px;width:1081px;height:1px;background:#e6e6e6"></div>
<div style="position:absolute;left:0px;top:526px;width:1083px;height:1px;background:#000"></div>
<div style="position:absolute;left:100px;top:525px;width:86px;height:19px;background:#fff;border:1px solid #000;border-top:0;box-sizing:content-box"></div>
<div style="position:absolute;left:101px;top:545px;width:88px;height:1px;background:#d8d8d8"></div>
<div style="position:absolute;left:188px;top:527px;width:1px;height:18px;background:#d8d8d8"></div>
<div style="position:absolute;left:284px;top:529px;width:1px;height:12px;background:#555"></div>
<div style="position:absolute;left:380px;top:529px;width:1px;height:12px;background:#555"></div>
<div style="position:absolute;left:0;top:547px;width:1088px;height:3px;background:#f8f8f8"></div>
<svg style="position:absolute;left:1050px;top:528px" width="30" height="16"><path d="M8.4 4.8L4.6 8L8.4 11.2Z" fill="#9a9a9a"/><path d="M21.9 4.8L25.5 8L21.9 11.2Z" fill="#9a9a9a"/></svg>

<div style="position:absolute;left:0;top:0;width:1081px;height:548px;overflow:hidden"><span class="t" style="left:21.00px;top:6.60px;font-size:9.8px;letter-spacing:-0.329px;color:#191970;">USDJPY.c,M1</span>
<span class="t" style="left:85.30px;top:6.60px;font-size:9.8px;letter-spacing:-0.473px;color:#191970;">117.080</span>
<span class="t" style="left:121.40px;top:6.60px;font-size:9.8px;letter-spacing:-0.406px;color:#191970;">117.103</span>
<span class="t" style="left:157.50px;top:6.60px;font-size:9.8px;letter-spacing:-0.240px;color:#191970;">117.079</span>
<span class="t" style="left:194.00px;top:6.60px;font-size:9.8px;letter-spacing:-0.306px;color:#191970;">117.097</span>
<span class="t" style="left:1044.60px;top:20.60px;font-size:9.8px;letter-spacing:-0.456px;color:#191970;">117.165</span>
<span class="t" style="left:1044.60px;top:55.60px;font-size:9.8px;letter-spacing:-0.335px;color:#191970;">117.110</span>
<span class="t" style="left:1044.60px;top:89.60px;font-size:9.8px;letter-spacing:-0.456px;color:#191970;">117.055</span>
<span class="t" style="left:1044.60px;top:124.60px;font-size:9.8px;letter-spacing:-0.456px;color:#191970;">117.000</span>
<span class="t" style="left:1044.60px;top:158.60px;font-size:9.8px;letter-spacing:-0.456px;color:#191970;">116.945</span>
<span class="t" style="left:1044.60px;top:192.60px;font-size:9.8px;letter-spacing:-0.456px;color:#191970;">116.890</span>
<span class="t" style="left:1044.60px;top:227.60px;font-size:9.8px;letter-spacing:-0.456px;color:#191970;">116.835</span>
<span class="t" style="left:1044.60px;top:261.60px;font-size:9.8px;letter-spacing:-0.456px;color:#191970;">116.780</span>
<span class="t" style="left:1044.60px;top:296.60px;font-size:9.8px;letter-spacing:-0.456px;color:#191970;">116.725</span>
<span class="t" style="left:1044.60px;top:330.60px;font-size:9.8px;letter-spacing:-0.456px;color:#191970;">116.670</span>
<span class="t" style="left:1044.60px;top:364.60px;font-size:9.8px;letter-spacing:-0.456px;color:#191970;">116.615</span>
<span class="t" style="left:1044.60px;top:63.60px;font-size:9.8px;letter-spacing:-0.340px;color:#fff;">117.097</span>
<span class="t" style="left:9.20px;top:380.60px;font-size:9.8px;letter-spacing:0.058px;color:#191970;">[CCI: 80]</span>
<span class="t" style="left:53.00px;top:380.60px;font-size:9.8px;letter-spacing:-0.047px;color:#191970;">[TCCI: 20]</span>
<span class="t" style="left:101.40px;top:380.60px;font-size:9.8px;letter-spacing:-0.256px;color:#191970;">[per LSMA: 25]</span>
<span class="t" style="left:167.60px;top:380.60px;font-size:9.8px;letter-spacing:-0.194px;color:#191970;">[Trend: 5]</span>
<span class="t" style="left:212.10px;top:380.60px;font-size:9.8px;letter-spacing:-0.486px;color:#191970;">Values</span>
<span class="t" style="left:242.90px;top:380.60px;font-size:9.8px;letter-spacing:0.353px;color:#191970;">CCI|TCCI:</span>
<span class="t" style="left:295.10px;top:380.60px;font-size:9.8px;letter-spacing:-0.616px;color:#191970;">122.3388</span>
<span class="t" style="left:335.50px;top:380.60px;font-size:9.8px;letter-spacing:-0.488px;color:#191970;">145.9302</span>
<span class="t" style="left:1042.20px;top:378.60px;font-size:9.8px;letter-spacing:-0.377px;color:#191970;">358.419</span>
<span class="t" style="left:1041.50px;top:427.60px;font-size:9.8px;letter-spacing:-1.199px;color:#191970;">100</span>
<span class="t" style="left:1042.20px;top:448.60px;font-size:9.8px;letter-spacing:-0.806px;color:#191970;">0.00</span>
<span class="t" style="left:1041.20px;top:448.60px;font-size:9.8px;letter-spacing:0.000px;color:#191970;">0</span>
<span class="t" style="left:1040.90px;top:469.60px;font-size:9.8px;letter-spacing:-0.720px;color:#191970;">-100</span>
<span class="t" style="left:1042.20px;top:494.60px;font-size:9.8px;letter-spacing:-0.234px;color:#191970;">-237.8662</span>
<span class="t" style="left:4.60px;top:509.60px;font-size:9.8px;letter-spacing:-0.548px;color:#191970;">14 Jan 2015</span>
<span class="t" style="left:68.60px;top:509.60px;font-size:9.8px;letter-spacing:-0.473px;color:#191970;">14 Jan 18:04</span>
<span class="t" style="left:132.60px;top:509.60px;font-size:9.8px;letter-spacing:-0.382px;color:#191970;">14 Jan 18:12</span>
<span class="t" style="left:196.60px;top:509.60px;font-size:9.8px;letter-spacing:-0.473px;color:#191970;">14 Jan 18:20</span>
<span class="t" style="left:260.60px;top:509.60px;font-size:9.8px;letter-spacing:-0.473px;color:#191970;">14 Jan 18:28</span>
<span class="t" style="left:324.60px;top:509.60px;font-size:9.8px;letter-spacing:-0.473px;color:#191970;">14 Jan 18:36</span>
<span class="t" style="left:388.60px;top:509.60px;font-size:9.8px;letter-spacing:-0.473px;color:#191970;">14 Jan 18:44</span>
<span class="t" style="left:452.60px;top:509.60px;font-size:9.8px;letter-spacing:-0.382px;color:#191970;">14 Jan 18:52</span>
<span class="t" style="left:516.60px;top:509.60px;font-size:9.8px;letter-spacing:-0.473px;color:#191970;">14 Jan 19:00</span>
<span class="t" style="left:580.60px;top:509.60px;font-size:9.8px;letter-spacing:-0.473px;color:#191970;">14 Jan 19:08</span>
<span class="t" style="left:644.60px;top:509.60px;font-size:9.8px;letter-spacing:-0.473px;color:#191970;">14 Jan 19:16</span>
<span class="t" style="left:708.60px;top:509.60px;font-size:9.8px;letter-spacing:-0.473px;color:#191970;">14 Jan 19:24</span>
<span class="t" style="left:772.60px;top:509.60px;font-size:9.8px;letter-spacing:-0.382px;color:#191970;">14 Jan 19:32</span>
<span class="t" style="left:836.60px;top:509.60px;font-size:9.8px;letter-spacing:-0.473px;color:#191970;">14 Jan 19:40</span>
<span class="t" style="left:900.60px;top:509.60px;font-size:9.8px;letter-spacing:-0.473px;color:#191970;">14 Jan 19:48</span>
<span class="t" style="left:964.60px;top:509.60px;font-size:9.8px;letter-spacing:-0.473px;color:#191970;">14 Jan 19:56</span>
<span class="t" style="left:14.30px;top:529.33px;font-size:10.6px;letter-spacing:-0.358px;color:#6e6e6e;">EURUSD.c,M30</span>
<span class="t" style="left:111.50px;top:529.33px;font-size:10.6px;letter-spacing:-0.234px;color:#000;">USDJPY.c,M1</span>
<span class="t" style="left:198.60px;top:529.33px;font-size:10.6px;letter-spacing:-0.258px;color:#6e6e6e;">USDCAD.c,M15</span>
<span class="t" style="left:294.70px;top:529.33px;font-size:10.6px;letter-spacing:-0.233px;color:#6e6e6e;">USDCHF.c,M30</span></div>
<div style="position:absolute;left:0;top:550px;width:1088px;height:1px;background:#a6a6a6"></div>
<div style="position:absolute;left:0;top:551px;width:1088px;height:24px;background:#fcfcfc"></div>
<div class="h" style="left:11px;top:557.5px;width:20px;text-align:left;color:#555;font-size:9px;transform:skewX(-18deg)">/</div>
<div style="position:absolute;left:75px;top:551px;width:1px;height:24px;background:#dce8f5"></div>
<div class="h" style="left:75px;top:555.5px;width:195px">Время</div>
<div style="position:absolute;left:275px;top:551px;width:1px;height:24px;background:#dce8f5"></div>
<div class="h" style="left:275px;top:555.5px;width:86px">Тип</div>
<div style="position:absolute;left:366px;top:551px;width:1px;height:24px;background:#dce8f5"></div>
<div class="h" style="left:366px;top:555.5px;width:67px">Объем</div>
<div style="position:absolute;left:438px;top:551px;width:1px;height:24px;background:#dce8f5"></div>
<div class="h" style="left:438px;top:555.5px;width:86px">Символ</div>
<div style="position:absolute;left:529px;top:551px;width:1px;height:24px;background:#dce8f5"></div>
<div class="h" style="left:529px;top:555.5px;width:86px">Цена</div>
<div style="position:absolute;left:620px;top:551px;width:1px;height:24px;background:#dce8f5"></div>
<div class="h" style="left:620px;top:555.5px;width:86px">S / L</div>
<div style="position:absolute;left:711px;top:551px;width:1px;height:24px;background:#dce8f5"></div>
<div class="h" style="left:711px;top:555.5px;width:86px">T / P</div>
<div style="position:absolute;left:802px;top:551px;width:1px;height:24px;background:#dce8f5"></div>
<div class="h" style="left:802px;top:555.5px;width:195px">Время</div>
<div style="position:absolute;left:1002px;top:551px;width:1px;height:24px;background:#dce8f5"></div>
<div class="h" style="left:1002px;top:555.5px;width:85px">Цена</div>
<div style="position:absolute;left:1092px;top:551px;width:1px;height:24px;background:#dce8f5"></div>
<div style="position:absolute;left:0;top:575px;width:1088px;height:20px;background:#3399ff"></div>
<div class="c" style="left:-2.7px;top:578px;width:60px;text-align:left;color:#fff">24206</div>
<div class="c" style="left:75px;top:578px;width:197px;color:#fff;letter-spacing:-0.1px;">2015.01.14 17:56:37</div>
<div class="c" style="left:275px;top:578px;width:88px;color:#fff;">buy</div>
<div class="c" style="left:366px;top:578px;width:69px;color:#fff;">2.00</div>
<div class="c" style="left:438px;top:578px;width:88px;color:#fff;">usdjpy.c</div>
<div class="c" style="left:529px;top:578px;width:88px;color:#fff;">116.731</div>
<div class="c" style="left:620px;top:578px;width:88px;color:#fff;">0.000</div>
<div class="c" style="left:711px;top:578px;width:88px;color:#fff;">117.138</div>
<div class="c" style="left:802px;top:578px;width:197px;color:#fff;letter-spacing:-0.1px;">2015.01.14 18:00:04</div>
<div class="c" style="left:1002px;top:578px;width:87px;color:#fff;">116.897</div>
<div style="position:absolute;left:0;top:595px;width:1088px;height:20px;background:#fff"></div>
<div style="position:absolute;left:0;top:595px;width:1088px;height:1px;background:#d4d4d4"></div>
<div class="c" style="left:-2.7px;top:598px;width:60px;text-align:left;color:#000">24889</div>
<div class="c" style="left:75px;top:598px;width:197px;color:#000;letter-spacing:-0.1px;">2015.01.14 18:00:13</div>
<div class="c" style="left:275px;top:598px;width:88px;color:#000;">sell</div>
<div class="c" style="left:366px;top:598px;width:69px;color:#000;">3.00</div>
<div class="c" style="left:438px;top:598px;width:88px;color:#000;">usdjpy.c</div>
<div class="c" style="left:529px;top:598px;width:88px;color:#000;">116.887</div>
<div class="c" style="left:620px;top:598px;width:88px;color:#000;">0.000</div>
<div style="position:absolute;left:712px;top:596px;width:88px;height:19px;background:#5ae85a"></div>
<div class="c" style="left:711px;top:598px;width:88px;color:#000;">116.809</div>
<div class="c" style="left:802px;top:598px;width:197px;color:#000;letter-spacing:-0.1px;">2015.01.14 18:04:14</div>
<div class="c" style="left:1002px;top:598px;width:87px;color:#000;">116.809</div>
<div style="position:absolute;left:0;top:615px;width:1088px;height:20px;background:#ececec"></div>
<div style="position:absolute;left:0;top:615px;width:1088px;height:1px;background:#d4d4d4"></div>
<div class="c" style="left:-2.7px;top:618px;width:60px;text-align:left;color:#000">26663</div>
<div class="c" style="left:75px;top:618px;width:197px;color:#000;letter-spacing:-0.1px;">2015.01.14 18:12:18</div>
<div class="c" style="left:275px;top:618px;width:88px;color:#000;">buy</div>
<div class="c" style="left:366px;top:618px;width:69px;color:#000;">4.00</div>
<div class="c" style="left:438px;top:618px;width:88px;color:#000;">usdjpy.c</div>
<div class="c" style="left:529px;top:618px;width:88px;color:#000;">116.839</div>
<div class="c" style="left:620px;top:618px;width:88px;color:#000;">0.000</div>
<div style="position:absolute;left:712px;top:616px;width:88px;height:19px;background:#5ae85a"></div>
<div class="c" style="left:711px;top:618px;width:88px;color:#000;">117.130</div>
<div class="c" style="left:802px;top:618px;width:197px;color:#000;letter-spacing:-0.1px;">2015.01.14 20:01:50</div>
<div class="c" style="left:1002px;top:618px;width:87px;color:#000;">117.130</div>
<div style="position:absolute;left:0;top:635px;width:1088px;height:20px;background:#fff"></div>
<div style="position:absolute;left:0;top:635px;width:1088px;height:1px;background:#d4d4d4"></div>
<div class="c" style="left:-2.7px;top:638px;width:60px;text-align:left;color:#000">34105</div>
<div class="c" style="left:75px;top:638px;width:197px;color:#000;letter-spacing:-0.1px;">2015.01.14 19:23:59</div>
<div class="c" style="left:275px;top:638px;width:88px;color:#000;">buy</div>
<div class="c" style="left:366px;top:638px;width:69px;color:#000;">1.00</div>
<div class="c" style="left:438px;top:638px;width:88px;color:#000;">usdjpy.c</div>
<div class="c" style="left:529px;top:638px;width:88px;color:#000;">116.914</div>
<div class="c" style="left:620px;top:638px;width:88px;color:#000;">0.000</div>
<div style="position:absolute;left:712px;top:636px;width:88px;height:19px;background:#5ae85a"></div>
<div class="c" style="left:711px;top:638px;width:88px;color:#000;">117.131</div>
<div class="c" style="left:802px;top:638px;width:197px;color:#000;letter-spacing:-0.1px;">2015.01.14 20:01:50</div>
<div class="c" style="left:1002px;top:638px;width:87px;color:#000;">117.131</div>
<div style="position:absolute;left:74px;top:575px;width:1px;height:80px;background:#c4c4c4"></div>
<div style="position:absolute;left:274px;top:575px;width:1px;height:80px;background:#c4c4c4"></div>
<div style="position:absolute;left:365px;top:575px;width:1px;height:80px;background:#c4c4c4"></div>
<div style="position:absolute;left:437px;top:575px;width:1px;height:80px;background:#c4c4c4"></div>
<div style="position:absolute;left:528px;top:575px;width:1px;height:80px;background:#c4c4c4"></div>
<div style="position:absolute;left:619px;top:575px;width:1px;height:80px;background:#c4c4c4"></div>
<div style="position:absolute;left:710px;top:575px;width:1px;height:80px;background:#c4c4c4"></div>
<div style="position:absolute;left:801px;top:575px;width:1px;height:80px;background:#c4c4c4"></div>
<div style="position:absolute;left:1001px;top:575px;width:1px;height:80px;background:#c4c4c4"></div>
<div style="position:absolute;left:0;top:655px;width:1088px;height:3px;background:#bdbdbd"></div>
</body></html>
